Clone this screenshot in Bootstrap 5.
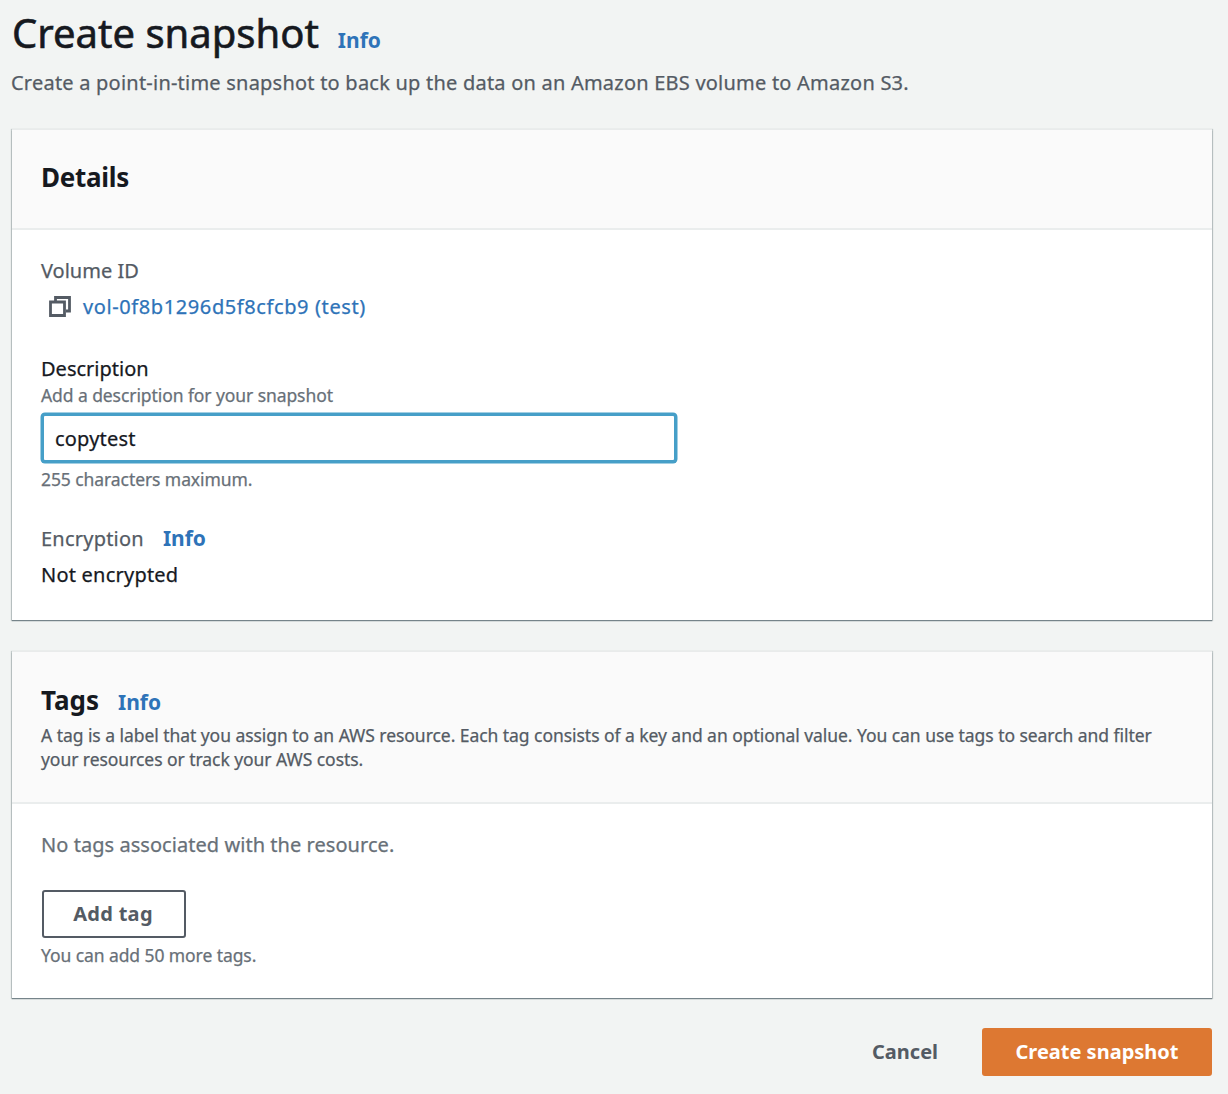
<!DOCTYPE html>
<html lang="en">
<head>
<meta charset="utf-8">
<meta name="viewport" content="width=device-width, initial-scale=1">
<title>Create snapshot</title>
<link href="https://cdn.jsdelivr.net/npm/bootstrap@5.3.0/dist/css/bootstrap.min.css" rel="stylesheet">
<style>
body{background:#f2f4f3;color:#16191f;font-family:"Noto Sans","Open Sans",sans-serif;font-size:20px;line-height:30px;-webkit-text-stroke:.25px}
.page{padding:3px 16px 18px 12px}
.page-title{font-size:40px;line-height:60px;font-weight:400;margin:0;-webkit-text-stroke:.6px}
.info{font-weight:700;color:#2e73b8;text-decoration:none;font-size:21px;line-height:30px;margin-left:19px;-webkit-text-stroke:0}
.muted{color:#545b64}
.hint{color:#687078;font-size:17.5px;line-height:24px;letter-spacing:-.08px}
.subtitle{margin:5px 0 32px -1px;letter-spacing:.22px}
.panel{--bs-card-border-width:0;--bs-card-border-radius:0;--bs-card-inner-border-radius:0;box-shadow:0 -1px 0 #e9ebeb,0 1px 1px #76848a,0 0 1px 1px #c3cbcb;margin-bottom:32px}
.panel .card-header{background:#fafafa;border-bottom:2px solid #eaeded;padding:29px 30px 33px 29px}
.panel .tags-head{padding:30px 30px 31px 29px}
.panel .card-body{padding:26px 29px 30px;color:#16191f}
.panel .tags-body{padding-bottom:31px}
.section-title{font-size:26px;line-height:36px;font-weight:700;margin:0;letter-spacing:-.3px;-webkit-text-stroke:0}
.tags-head .section-title{letter-spacing:0}
.tags-text{font-size:17.5px;line-height:24px;margin-top:5px;letter-spacing:-.05px}
.field{margin-top:32px}
.value{margin-top:6px}
.value-text,.field .muted{letter-spacing:.22px}
.vol-link{color:#2e73b8;text-decoration:none;margin-left:12px;letter-spacing:.6px}
.desc-label{margin-bottom:-1px}
.desc-input{width:636px;height:50px;margin:6px 0 4px;padding:0 11px;border:3px solid #469fc8;border-radius:4px;font-size:20px;letter-spacing:.2px;color:#16191f}
.desc-input,.desc-input:focus{box-shadow:0 0 0 .5px #469fc8;border-color:#469fc8;color:#16191f}
.no-tags{color:#687078;letter-spacing:.05px}
.console-btn{--bs-btn-font-size:20px;--bs-btn-font-weight:700;--bs-btn-border-radius:3px;--bs-btn-padding-x:0;--bs-btn-padding-y:0;--bs-btn-border-width:2px;height:48px;line-height:44px;--bs-btn-color:#545b64;-webkit-text-stroke:0}
.add-btn{width:144px;margin:30px 0 5px 1px;--bs-btn-border-color:#545b64;--bs-btn-bg:#fff;letter-spacing:.3px;padding-right:2px}
.create-btn{width:230px;--bs-btn-bg:#dd7832;--bs-btn-border-color:#dd7832;--bs-btn-color:#fff}
.cancel-btn{width:68px;margin-right:44px}
.actions{padding-top:30px}
</style>
<script src="https://cdn.jsdelivr.net/npm/bootstrap@5.3.0/dist/js/bootstrap.bundle.min.js"></script>
</head>
<body>
<main class="page">
  <div class="d-flex align-items-baseline">
    <h1 class="page-title">Create snapshot</h1><a class="info" href="#">Info</a>
  </div>
  <p class="subtitle muted">Create a point-in-time snapshot to back up the data on an Amazon EBS volume to Amazon S3.</p>

  <section class="card panel">
    <div class="card-header"><h2 class="section-title">Details</h2></div>
    <div class="card-body">
      <div class="muted">Volume ID</div>
      <div class="value d-flex align-items-center">
        <svg class="ms-2" width="22" height="22" viewBox="0 0 22 22" fill="none" stroke="#545b64" stroke-width="2.8"><path d="M6.5 5V1.5H20.5V15H17M1.5 6h14v13.5h-14z"/></svg>
        <a class="vol-link" href="#">vol-0f8b1296d5f8cfcb9 (test)</a>
      </div>
      <div class="field">
        <label class="d-block desc-label" for="desc">Description</label>
        <div class="hint">Add a description for your snapshot</div>
        <input id="desc" class="form-control desc-input" type="text" value="copytest">
        <div class="hint">255 characters maximum.</div>
      </div>
      <div class="field d-flex align-items-baseline">
        <span class="muted">Encryption</span><a class="info" href="#">Info</a>
      </div>
      <div class="value value-text">Not encrypted</div>
    </div>
  </section>

  <section class="card panel mb-0">
    <div class="card-header tags-head">
      <div class="d-flex align-items-baseline"><h2 class="section-title">Tags</h2><a class="info" href="#">Info</a></div>
      <div class="tags-text muted">A tag is a label that you assign to an AWS resource. Each tag consists of a key and an optional value. You can use tags to search and filter<br>your resources or track your AWS costs.</div>
    </div>
    <div class="card-body tags-body">
      <div class="no-tags">No tags associated with the resource.</div>
      <button class="btn console-btn add-btn d-block" type="button">Add tag</button>
      <div class="hint">You can add 50 more tags.</div>
    </div>
  </section>

  <div class="d-flex justify-content-end actions">
    <button class="btn console-btn cancel-btn" type="button">Cancel</button>
    <button class="btn console-btn create-btn" type="button">Create snapshot</button>
  </div>
</main>
</body>
</html>
